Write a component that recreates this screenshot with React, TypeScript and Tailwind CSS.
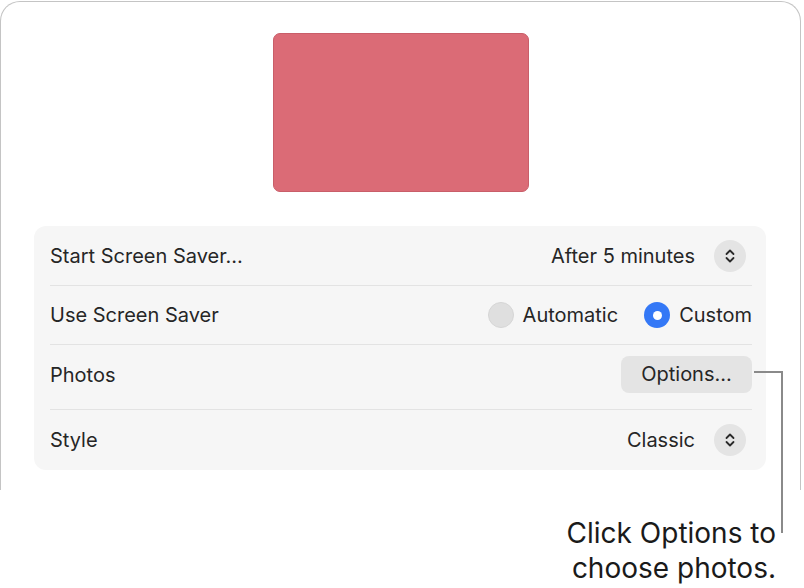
import React from 'react';

const font = { fontFamily: '"Inter", "Noto Sans", sans-serif' };

function Stepper() {
  return (
    <div className="w-8 h-8 rounded-full bg-[#e4e4e4] flex items-center justify-center mr-[6px]">
      <svg width="12" height="16" viewBox="0 0 12 16" fill="none" stroke="#2a2a2a" strokeWidth="1.8" strokeLinecap="round" strokeLinejoin="round">
        <path d="M2.5 6 L6 2.5 L9.5 6" />
        <path d="M2.5 10 L6 13.5 L9.5 10" />
      </svg>
    </div>
  );
}

function Row({ label, children, h, last }: { label: string; children: React.ReactNode; h: string; last?: boolean }) {
  return (
    <div className={`flex items-center justify-between ${h} ${last ? '' : 'border-b border-[#e3e3e3]'}`}>
      <span>{label}</span>
      <div className="flex items-center">{children}</div>
    </div>
  );
}

export default function App() {
  return (
    <div className="relative w-[804px] h-[588px] bg-white overflow-hidden text-[#262626]" style={font}>
      <div className="mt-[1px] w-[801px] h-[489px] border-l border-t border-r border-[#c4c4c4] rounded-t-[20px] pt-[31px]">
        <div className="mx-auto w-[256px] h-[159px] rounded-[7px] bg-[#db6b76] border border-[#c95e69]" />
        <div className="mt-[34px] ml-[33px] w-[732px] rounded-[12px] bg-[#f6f6f6] pl-4 pr-[14px] text-[20px]">
          <Row label="Start Screen Saver…" h="h-[60px]">
            <span className="mr-[19px]">After 5 minutes</span>
            <Stepper />
          </Row>
          <Row label="Use Screen Saver" h="h-[59px]">
            <div className="w-[26px] h-[26px] rounded-full bg-[#dfdfdf] border border-[#d6d6d6]" />
            <span className="ml-[9px]">Automatic</span>
            <div className="ml-[26px] w-[26px] h-[26px] rounded-full bg-[#3478f6] flex items-center justify-center">
              <div className="w-[9px] h-[9px] rounded-full bg-white" />
            </div>
            <span className="ml-[9px]">Custom</span>
          </Row>
          <Row label="Photos" h="h-[65px] pb-[4px]">
            <button className="w-[131px] h-[37px] mb-[2px] rounded-[8px] bg-[#e4e4e4] text-[20px] flex items-center justify-center">
              Options…
            </button>
          </Row>
          <Row label="Style" h="h-[60px]" last>
            <span className="mr-[19px]">Classic</span>
            <Stepper />
          </Row>
        </div>
      </div>
      <div className="mt-[26px] pr-[28px] text-right text-[28px] leading-[35px] text-[#1a1a1a]">
        <div>Click Options to</div>
        <div>choose photos.</div>
      </div>
      <div className="absolute left-[754px] top-[371px] w-[29px] h-[2px] bg-[#8a8a8a]" />
      <div className="absolute left-[781px] top-[371px] w-[2px] h-[162px] bg-[#8a8a8a]" />
    </div>
  );
}
